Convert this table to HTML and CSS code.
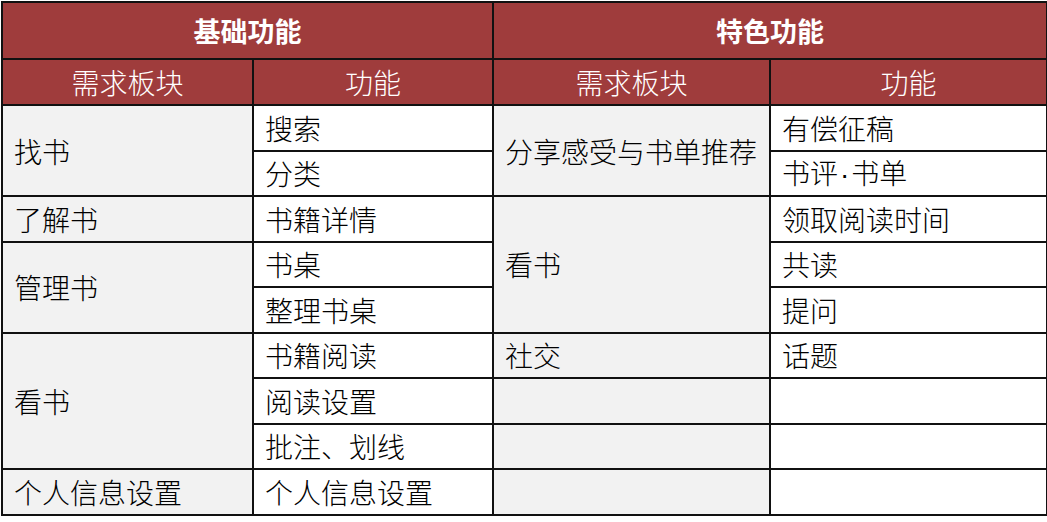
FILE: index.html
```html
<!DOCTYPE html>
<html lang="zh">
<head>
<meta charset="utf-8">
<link rel="stylesheet" href="styles.css">
</head>
<body>
<table class="grid">
  <colgroup>
    <col class="c1"><col class="c2"><col class="c3"><col class="c4">
  </colgroup>
  <thead>
    <tr class="h1">
      <th colspan="2">基础功能</th>
      <th colspan="2">特色功能</th>
    </tr>
    <tr class="h2">
      <th>需求板块</th><th>功能</th><th>需求板块</th><th>功能</th>
    </tr>
  </thead>
  <tbody>
    <tr>
      <td class="need" rowspan="2">找书</td><td class="fn">搜索</td>
      <td class="need2" rowspan="2">分享感受与书单推荐</td><td class="fn">有偿征稿</td>
    </tr>
    <tr>
      <td class="fn">分类</td><td class="fn">书评<span class="dot">·</span>书单</td>
    </tr>
    <tr>
      <td class="need">了解书</td><td class="fn">书籍详情</td>
      <td class="need2" rowspan="3">看书</td><td class="fn">领取阅读时间</td>
    </tr>
    <tr>
      <td class="need" rowspan="2">管理书</td><td class="fn">书桌</td>
      <td class="fn">共读</td>
    </tr>
    <tr>
      <td class="fn">整理书桌</td><td class="fn">提问</td>
    </tr>
    <tr>
      <td class="need" rowspan="3">看书</td><td class="fn">书籍阅读</td>
      <td class="need2">社交</td><td class="fn">话题</td>
    </tr>
    <tr>
      <td class="fn">阅读设置</td><td class="need2"></td><td class="fn"></td>
    </tr>
    <tr>
      <td class="fn">批注、划线</td><td class="need2"></td><td class="fn"></td>
    </tr>
    <tr>
      <td class="need">个人信息设置</td><td class="fn">个人信息设置</td>
      <td class="need2"></td><td class="fn"></td>
    </tr>
  </tbody>
</table>
</body>
</html>
```

FILE: styles.css
```css
html, body {
  margin: 0;
  padding: 0;
  background: #ffffff;
}
body {
  padding: 1px 0 0 1px;
  font-family: "Noto Sans CJK SC", "Noto Sans", sans-serif;
}
.grid {
  border-collapse: collapse;
  table-layout: fixed;
  width: 1045px;
  font-size: 28px;
  color: #000;
}
.c1 { width: 251px; }
.c2 { width: 240px; }
.c3 { width: 277px; }
.c4 { width: 277px; }
.grid th, .grid td {
  border: 2px solid #111;
  padding: 0 11px;
  line-height: 1;
  white-space: nowrap;
}
.grid th {
  background: #9f3c3c;
  color: #fff;
  text-align: center;
}
.h1 { height: 57px; }
.h1 th { font-weight: 700; font-size: 27px; }
.h2 { height: 46px; }
.h2 th { font-weight: 300; }
.grid tbody tr { height: 45.5px; }
.grid td { text-align: left; vertical-align: middle; font-weight: 300; }
.need { background: #f2f2f2; }
.need2 { background: #f2f2f2; }
.fn { background: #ffffff; }
.dot {
  font-family: "Liberation Sans", sans-serif;
  padding: 0 2px;
}
```
